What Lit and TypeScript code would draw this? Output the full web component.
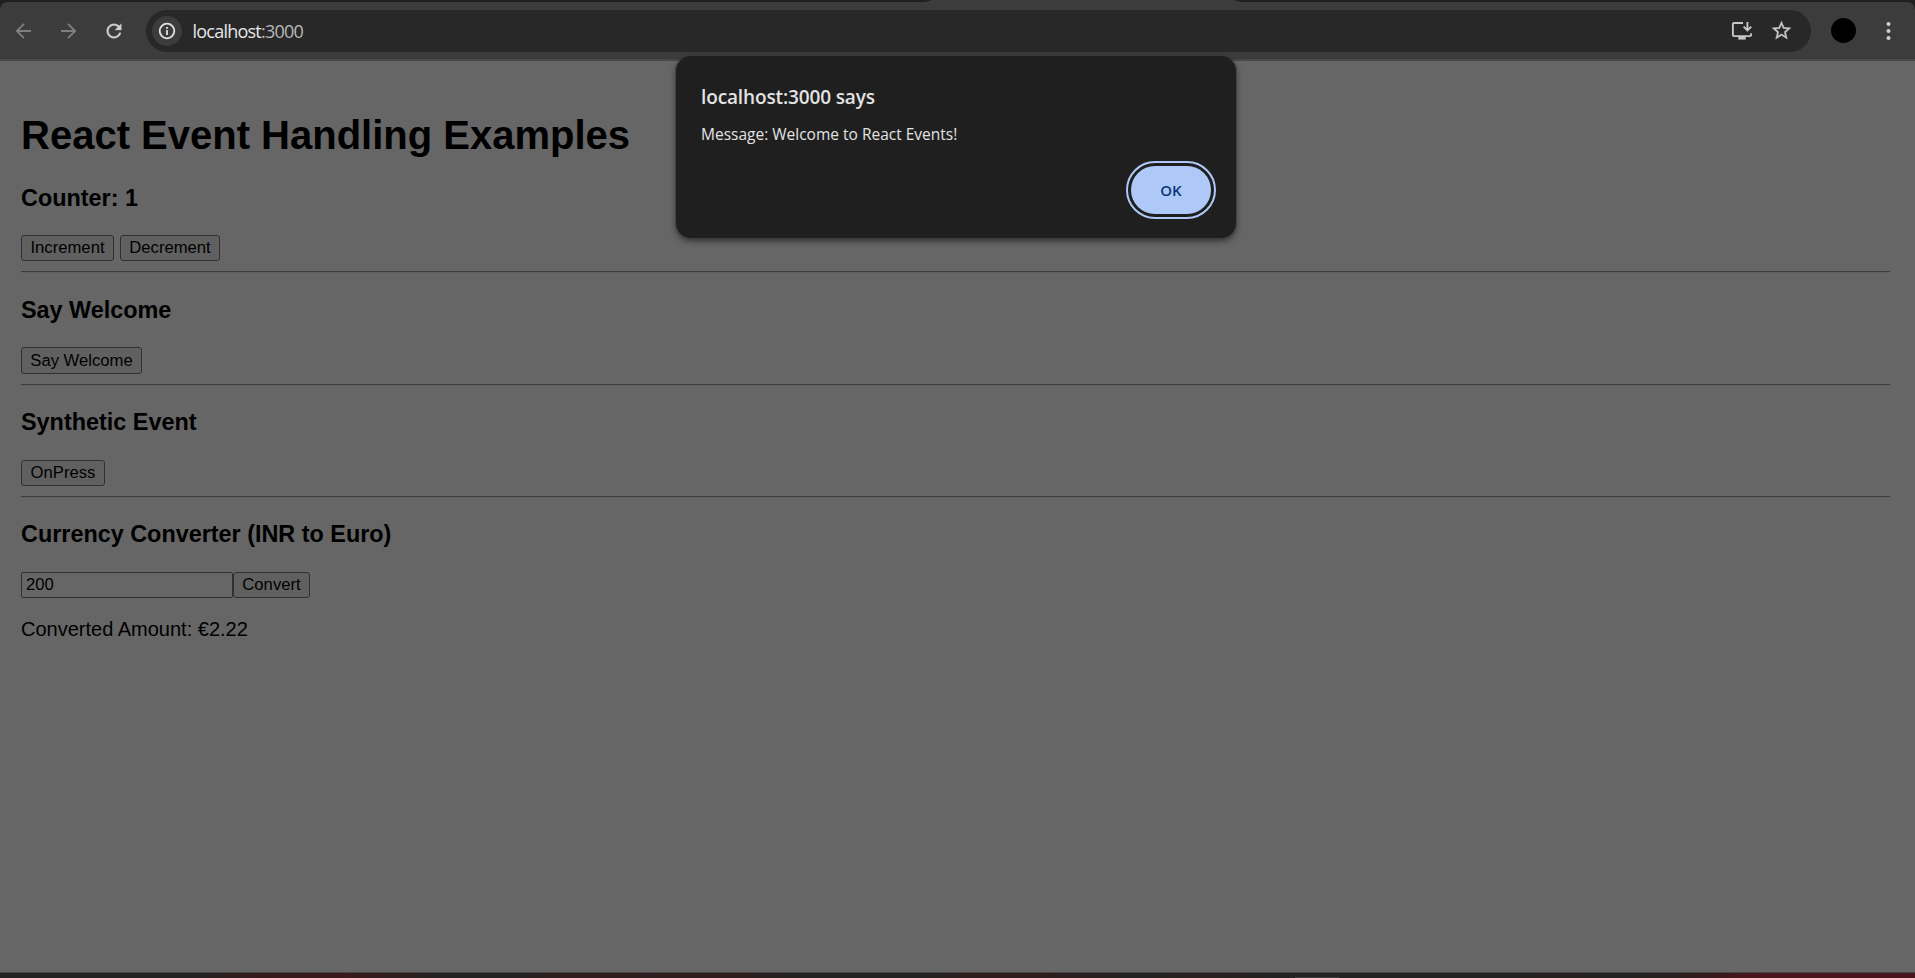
import { LitElement, html, css } from "lit";
import { customElement, state } from "lit/decorators.js";

@customElement("browser-bar")
class BrowserBar extends LitElement {
  static styles = css`
    :host { display: block; height: 61px; background: #202020; font-family: "Open Sans", "Noto Sans", sans-serif; }
    .strip { height: 2px; display: flex; }
    .tab { margin-left: 925px; width: 316px; background: #3c3c3c; clip-path: polygon(0 100%, 7px 0, 309px 0, 100% 100%); }
    .bar { box-sizing: border-box; height: 59px; background: #3c3c3c; border-radius: 8px 8px 0 0; border-bottom: 2px solid #474747; display: flex; align-items: center; padding: 0 16px 0 13px; }
    svg { display: block; flex: none; }
    .nav { display: flex; gap: 23px; width: 133px; flex: none; }
    .omni { flex: none; box-sizing: border-box; width: 1665px; height: 42px; border-radius: 21px; background: #282828; display: flex; align-items: center; padding: 0 18px 0 6px; }
    .info { width: 30px; height: 30px; border-radius: 50%; background: #3c3c3c; display: grid; place-items: center; }
    .url { margin-left: 10.5px; font-size: 18px; line-height: 24px; letter-spacing: -0.77px; color: #e6e6e6; flex: 1; white-space: nowrap; }
    .port { color: #b9b9b9; }
    .star { margin-left: 17px; }
    .avatar { flex: none; width: 25px; height: 25px; border-radius: 50%; background: #000; margin: 0 30px 0 20px; }
  `;
  render() {
    return html`
      <div class="strip"><div class="tab"></div></div>
      <div class="bar">
        <div class="nav">
          <svg width="22" height="22" viewBox="0 0 22 22" fill="none" stroke="#7f7f7f" stroke-width="1.8"><path d="M18 11H4.2M11 3.8L3.8 11l7.2 7.2"/></svg>
          <svg width="22" height="22" viewBox="0 0 22 22" fill="none" stroke="#7f7f7f" stroke-width="1.8"><path d="M3 11h13.8M10 3.8l7.2 7.2-7.2 7.2"/></svg>
          <svg width="22" height="22" viewBox="0 0 24 24" fill="#d0d0d0" stroke="#d0d0d0" stroke-width="0.3"><path d="M17.65 6.35C16.2 4.9 14.21 4 12 4c-4.42 0-7.99 3.58-7.99 8s3.57 8 7.99 8c3.73 0 6.84-2.55 7.73-6h-2.08c-.82 2.33-3.04 4-5.65 4-3.31 0-6-2.69-6-6s2.69-6 6-6c1.66 0 3.14.69 4.22 1.78L13 11h7V4l-2.35 2.35z"/></svg>
        </div>
        <div class="omni">
          <div class="info">
            <svg width="18" height="18" viewBox="0 0 18 18"><circle cx="9" cy="9" r="7.3" fill="none" stroke="#e3e3e3" stroke-width="1.8"/><path d="M8.1 8.1h1.8v5H8.1zM8.1 5h1.8v1.8H8.1z" fill="#e3e3e3"/></svg>
          </div>
          <div class="url">localhost<span class="port">:3000</span></div>
          <svg width="22" height="20" viewBox="0 0 22 20" fill="none" stroke="#c7c7c7" stroke-width="1.9"><path d="M12 2H3Q1.9 2 1.9 3.1V14Q1.9 15.1 3 15.1H19Q20.1 15.1 20.1 14V12.3M16.4 1V9.2M12.6 5.7l3.8 3.8 3.8-3.8"/><path d="M7.3 15h7.4v3.6H7.3z" fill="#c7c7c7" stroke="none"/></svg>
          <svg class="star" width="23" height="23" viewBox="0 0 24 24" fill="#c7c7c7" stroke="#c7c7c7" stroke-width="0.3"><path d="M22 9.24l-7.19-.62L12 2 9.19 8.63 2 9.24l5.46 4.73L5.82 21 12 17.27 18.18 21l-1.63-7.03L22 9.24zM12 15.4l-3.76 2.27 1-4.28-3.32-2.88 4.38-.38L12 6.1l1.71 4.04 4.38.38-3.32 2.88 1 4.28L12 15.4z"/></svg>
        </div>
        <div class="avatar"></div>
        <svg width="5" height="20" viewBox="0 0 5 20" fill="#d0d0d0"><circle cx="2.5" cy="3" r="2"/><circle cx="2.5" cy="10" r="2"/><circle cx="2.5" cy="17" r="2"/></svg>
      </div>
    `;
  }
}

@customElement("alert-dialog")
class AlertDialog extends LitElement {
  static styles = css`
    :host { position: absolute; left: 676px; top: 56px; width: 560px; height: 182px; box-sizing: border-box; border-radius: 15px; background: #1f1f1f; box-shadow: 0 0 0 1px #3a3a3a66, 0 3px 6px #0008; padding: 26px 25px; display: flex; flex-direction: column; font-family: "Open Sans", "Noto Sans", sans-serif; color: #e3e3e3; }
    .title { font-size: 19px; line-height: 30px; font-weight: 600; letter-spacing: -0.13px; white-space: nowrap; }
    .msg { font-size: 15.5px; line-height: 24px; margin-top: 10px; letter-spacing: 0; white-space: nowrap; }
    .ok { align-self: flex-end; flex: none; margin-top: 20px; width: 80px; height: 48px; border: 0; border-radius: 24px; background: #aec9f8; color: #0b3575; outline: 2px solid #aec9f8; outline-offset: 3px; font: 600 15px "Open Sans", "Noto Sans", sans-serif; letter-spacing: 0; padding: 0; }
  `;
  render() {
    return html`
      <div class="title">localhost:3000 says</div>
      <div class="msg">Message: Welcome to React Events!</div>
      <button class="ok">OK</button>
    `;
  }
}

@customElement("app-root")
class AppRoot extends LitElement {
  @state() count = 1;
  static styles = css`
    :host { display: block; position: relative; width: 1915px; height: 978px; overflow: hidden; background: #666; font-family: Arial, "Liberation Sans", sans-serif; color: #000; }
    .shell { display: flex; flex-direction: column; height: 978px; }
    main { flex: 1; padding: 0 25px 0 21px; font-size: 20px; }
    h1 { margin: 51px 0 0; font-size: 40px; line-height: 46px; }
    h3 { margin: 0; font-size: 23.4px; line-height: 27px; }
    h3.first { margin-top: 27px; }
    .row { display: flex; height: 26px; margin-top: 23px; }
    .row.tall { height: 27px; }
    .row.low { margin-top: 24px; }
    .gap { gap: 6px; }
    button, input { box-sizing: border-box; height: 100%; border: 1px solid #303030; border-radius: 3px; background: #606060; color: #000; font: 16.667px Arial, "Liberation Sans", sans-serif; padding: 0; }
    input { background: #666; width: 212px; padding: 0 3px 0 4px; border-radius: 2px; }
    .inc { width: 93px; } .dec { width: 100px; } .say { width: 121px; } .press { width: 84px; } .conv { width: 77px; }
    hr { margin: 10px 0 23px; border: 0; border-top: 1px solid #3c3c3c; border-bottom: 1px solid #606060; height: 0; }
    hr.first { margin-bottom: 24px; }
    p { margin: 20px 0 0; line-height: 23px; }
    .edge { flex: none; box-sizing: border-box; height: 6px; border-top: 1px solid #474747; display: flex; align-items: flex-end; background: linear-gradient(90deg, #222 0, #222 190px, #361a1a 265px, #3a1a1a 350px, #222 450px, #222 510px, #321c1c 575px, #2b1e1e 640px, #301c1c 720px, #222 810px, #222 920px, #301c1c 990px, #2a1e1e 1080px, #222 1140px, #2b1f1f 1200px, #222 1280px, #222 1510px, #281f1f 1560px, #222 1620px, #2a1e1e 1680px, #46151a 1740px, #4a151a 1915px); }
    .handle { margin-left: 1295px; width: 44px; height: 1px; background: #404040; }
  `;
  render() {
    return html`
      <div class="shell">
        <browser-bar></browser-bar>
        <main>
          <h1>React Event Handling Examples</h1>
          <h3 class="first">Counter: ${this.count}</h3>
          <div class="row gap">
            <button class="inc" @click=${() => this.count++}>Increment</button>
            <button class="dec" @click=${() => this.count--}>Decrement</button>
          </div>
          <hr class="first" />
          <h3>Say Welcome</h3>
          <div class="row tall"><button class="say">Say Welcome</button></div>
          <hr />
          <h3>Synthetic Event</h3>
          <div class="row low"><button class="press">OnPress</button></div>
          <hr />
          <h3>Currency Converter (INR to Euro)</h3>
          <div class="row low"><input .value=${"200"} /><button class="conv">Convert</button></div>
          <p>Converted Amount: €2.22</p>
        </main>
        <div class="edge"><div class="handle"></div></div>
      </div>
      <alert-dialog></alert-dialog>
    `;
  }
}
